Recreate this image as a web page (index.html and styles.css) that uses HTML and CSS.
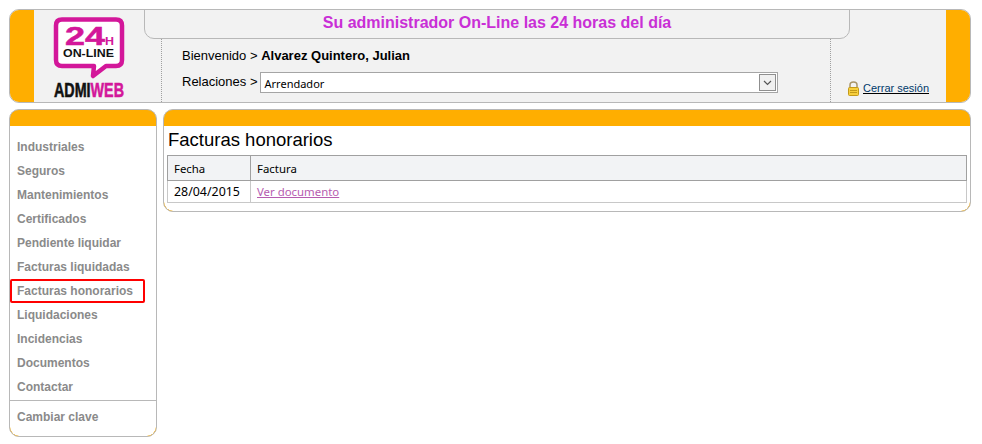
FILE: index.html
```html
<!DOCTYPE html>
<html lang="es">
<head>
<meta charset="utf-8">
<title>Facturas honorarios</title>
<link rel="stylesheet" href="styles.css">
</head>
<body>
<div class="page">
  <header class="head">
    <div class="head-edge"></div>
    <div class="logo">
      <svg class="logo-svg" width="110" height="92" viewBox="34 10 110 92">
        <path class="bubble" d="M62 19.500H116Q122 19.500 122 25.500V60Q122 66 116 66H106L93 76L94 66H62Q56 66 56 60V25.500Q56 19.500 62 19.500Z"/>
        <text class="l24" x="65" y="45" textLength="40" lengthAdjust="spacingAndGlyphs">24</text>
        <text class="lh" x="105" y="45" textLength="9" lengthAdjust="spacingAndGlyphs">H</text>
        <text class="lon" x="63" y="57" textLength="51" lengthAdjust="spacingAndGlyphs">ON-LINE</text>
        <text class="lbrand" x="54" y="97" textLength="70" lengthAdjust="spacingAndGlyphs"><tspan class="ladmi">ADMI</tspan><tspan class="lweb">WEB</tspan></text>
      </svg>
    </div>
    <div class="head-main">
      <div class="banner">Su administrador On-Line las 24 horas del día</div>
      <div class="head-row">
        <div class="user">
          <p class="welcome">Bienvenido &gt; <b>Alvarez Quintero, Julian</b></p>
          <div class="relations">
            <span class="rel-label">Relaciones &gt;</span>
            <div class="select">
              <span class="select-text">Arrendador</span>
              <span class="select-btn">
                <svg width="9" height="6" viewBox="0 0 9 6"><path class="chev" d="M1 1L4.500 4.500L8 1"/></svg>
              </span>
            </div>
          </div>
        </div>
        <div class="logout">
          <svg class="lock" width="13" height="15" viewBox="0 0 13 15">
            <path class="shackle" d="M3 7V4Q3 1 6.500 1Q10 1 10 4V7"/>
            <rect class="lock-body" x="1.500" y="6.500" width="10" height="8" rx="1"/>
            <path class="lock-line" d="M3 9.500H10M3 11.500H10"/>
          </svg>
          <a class="logout-link" href="#">Cerrar sesión</a>
        </div>
      </div>
    </div>
    <div class="head-edge"></div>
  </header>

  <div class="columns">
    <aside class="panel side">
      <div class="panel-bar"></div>
      <div class="panel-body side-body">
        <nav class="menu">
          <a href="#">Industriales</a>
          <a href="#">Seguros</a>
          <a href="#">Mantenimientos</a>
          <a href="#">Certificados</a>
          <a href="#">Pendiente liquidar</a>
          <a href="#">Facturas liquidadas</a>
          <a href="#" class="current">Facturas honorarios</a>
          <a href="#">Liquidaciones</a>
          <a href="#">Incidencias</a>
          <a href="#">Documentos</a>
          <a href="#">Contactar</a>
        </nav>
        <nav class="menu menu-foot">
          <a href="#">Cambiar clave</a>
        </nav>
      </div>
    </aside>
    <main class="panel content">
      <div class="panel-bar"></div>
      <div class="panel-body content-body">
        <h1 class="title">Facturas honorarios</h1>
        <table class="grid">
          <thead>
            <tr><th class="col-date">Fecha</th><th>Factura</th></tr>
          </thead>
          <tbody>
            <tr><td class="date">28/04/2015</td><td><a class="doc" href="#">Ver documento</a></td></tr>
          </tbody>
        </table>
      </div>
    </main>
  </div>
</div>
</body>
</html>
```
FILE: styles.css
```css
* { box-sizing: border-box; }
html, body { margin: 0; padding: 0; background: #fff; }
body { font-family: "Liberation Sans", Arial, sans-serif; color: #000; }
.page { padding: 9px; width: 980px; }

.head {
  display: flex;
  height: 94px;
  border: 1px solid #b8b8b8;
  border-radius: 10px;
  background: #f2f2f2;
  overflow: hidden;
}
.head-edge { width: 24px; flex: none; background: #ffae00; }
.logo { width: 110px; flex: none; }
.logo-svg { display: block; }
.bubble { fill: #fff; stroke: #d3179a; stroke-width: 4.500; stroke-linejoin: round; }
.l24 { font: bold 25px "Liberation Sans", sans-serif; fill: #d3179a; stroke: #d3179a; stroke-width: .5px; }
.lh { font: bold 10px "Liberation Sans", sans-serif; fill: #d3179a; }
.lon { font: bold 11px "Liberation Sans", sans-serif; fill: #111; }
.lbrand { font: bold 21px "Liberation Sans", sans-serif; stroke-width: .6px; }
.ladmi { fill: #111; stroke: #111; }
.lweb { fill: #d3179a; stroke: #d3179a; }

.head-main { flex: 1; display: flex; flex-direction: column; margin-top: -1px; }
.banner {
  width: 706px;
  height: 30px;
  flex: none;
  border: 1px solid #b8b8b8;
  border-radius: 0 0 10px 10px;
  text-align: center;
  font-size: 16px;
  font-weight: bold;
  line-height: 26px;
  color: #c92fd6;
}
.head-row { flex: 1; display: flex; margin-left: 17px; }
.user {
  width: 670px;
  flex: none;
  border-left: 1px dotted #a0a0a0;
  border-right: 1px dotted #a0a0a0;
  padding: 9px 0 0 20px;
  font-size: 13px;
}
.welcome { margin: 0; line-height: 16px; }
.relations { display: flex; align-items: flex-start; gap: 2px; margin-top: 8px; line-height: 16px; }
.rel-label { margin-top: 2px; }
.select {
  width: 518px;
  height: 21px;
  display: flex;
  align-items: stretch;
  justify-content: space-between;
  background: #fff;
  border: 1px solid #a5a5a5;
  padding: 1px;
}
.select-text { font: 11px/19px "Noto Sans", sans-serif; padding-left: 3px; }
.select-btn {
  width: 17px;
  display: flex;
  align-items: center;
  justify-content: center;
  background: #f0f0f0;
  border: 1px solid #8f8f8f;
}
.chev { fill: none; stroke: #555; stroke-width: 1.200; }

.logout { flex: 1; display: flex; align-items: flex-end; gap: 3px; padding: 0 0 6px 17px; }
.lock { flex: none; margin-left: -1px; }
.shackle { fill: none; stroke: #a89468; stroke-width: 1.500; }
.lock-body { fill: #f7cf3d; stroke: #c39a1a; }
.lock-line { stroke: #c39a1a; stroke-width: 1; }
.logout-link { font-size: 11px; color: #003a6b; line-height: 14px; margin-bottom: 1px; text-decoration-color: #000; }

.columns { display: flex; align-items: flex-start; gap: 6px; margin-top: 6px; }
.panel {
  border: 1px solid #b8b8b8;
  border-radius: 10px;
  background: #ffae00;
  overflow: hidden;
}
.panel-bar { height: 16px; }
.panel-body { background: #fff; border-radius: 0 0 9px 9px; }
.side { width: 148px; flex: none; }
.side-body { padding-top: 9px; height: 310px; }
.content { width: 808px; flex: none; }
.content-body { padding: 3px 3px 7px 3px; height: 85px; }

.menu { display: flex; flex-direction: column; }
.menu a {
  display: block;
  height: 24px;
  line-height: 24px;
  padding-left: 7px;
  font-size: 12px;
  font-weight: bold;
  color: #8a8a8a;
  text-decoration: none;
}
.menu a.current {
  width: 135px;
  border: 2px solid #f00;
  border-radius: 2px;
  padding-left: 5px;
  line-height: 20px;
}
.menu-foot { border-top: 1px solid #b8b8b8; margin-top: 1px; padding-top: 4px; }

.title { margin: 0 0 4px 1px; font-size: 18.500px; font-weight: normal; line-height: 22px; }
.grid {
  width: 800px;
  border-collapse: collapse;
  font: 11.400px "Noto Sans", sans-serif;
  border: 1px solid #a0a0a0;
}
.grid th {
  height: 25px;
  background: #f2f3f5;
  border: 1px solid #a0a0a0;
  text-align: left;
  font-weight: normal;
  padding: 0 6px;
}
.grid td { height: 22px; border: 1px solid #c8c8c8; border-top-color: #a0a0a0; padding: 0 6px; }
.grid td.date { font-size: 12.400px; }
.col-date { width: 83px; }
.doc { color: #b65cb0; }
```
